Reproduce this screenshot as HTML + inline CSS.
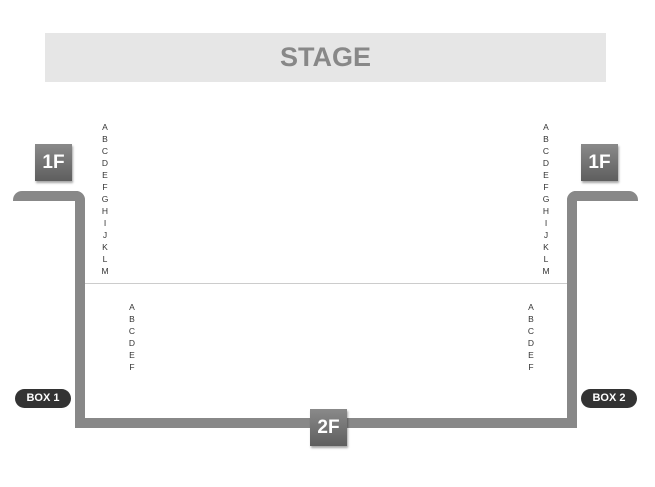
<!DOCTYPE html><html><head><style>
body{margin:0;width:655px;height:487px;background:#fff;position:relative;overflow:hidden;font-family:"Liberation Sans",sans-serif}
div{position:absolute}
.stage{left:45px;top:33px;width:561px;height:49px;background:#e6e6e6;color:#888;font-weight:bold;font-size:27px;text-align:center;line-height:49px}
.w{background:#888}
.f{width:37px;height:37px;background:linear-gradient(#8a8a8a,#5e5e5e);color:#fff;font-weight:bold;font-size:19px;line-height:37px;text-align:center;box-shadow:1px 2px 2px rgba(0,0,0,.35)}
.b{width:56px;height:19px;background:#333;color:#fff;border-radius:10px;font-weight:bold;font-size:11px;line-height:19px;text-align:center}
.l{font-size:8.5px;line-height:12px;color:#333;text-align:center;width:10px}
</style></head><body>
<div class="stage">STAGE</div>
<div class="w" style="left:13px;top:191px;width:72px;height:10px;border-radius:9px 9px 0 0"></div>
<div class="w" style="left:75px;top:191px;width:10px;height:237px;border-top-right-radius:9px"></div>
<div class="w" style="left:75px;top:418px;width:502px;height:10px"></div>
<div class="w" style="left:567px;top:191px;width:10px;height:237px;border-top-left-radius:9px"></div>
<div class="w" style="left:567px;top:191px;width:71px;height:10px;border-radius:9px 9px 0 0"></div>
<div style="left:85px;top:283px;width:482px;height:1px;background:#ccc"></div>
<div class="f" style="left:35px;top:144px">1F</div>
<div class="f" style="left:581px;top:144px">1F</div>
<div class="f" style="left:310px;top:409px">2F</div>
<div class="b" style="left:15px;top:389px">BOX 1</div>
<div class="b" style="left:581px;top:389px">BOX 2</div>
<div class="l" style="left:100px;top:121px">A<br>B<br>C<br>D<br>E<br>F<br>G<br>H<br>I<br>J<br>K<br>L<br>M</div>
<div class="l" style="left:541px;top:121px">A<br>B<br>C<br>D<br>E<br>F<br>G<br>H<br>I<br>J<br>K<br>L<br>M</div>
<div class="l" style="left:127px;top:301px">A<br>B<br>C<br>D<br>E<br>F</div>
<div class="l" style="left:526px;top:301px">A<br>B<br>C<br>D<br>E<br>F</div>
</body></html>
